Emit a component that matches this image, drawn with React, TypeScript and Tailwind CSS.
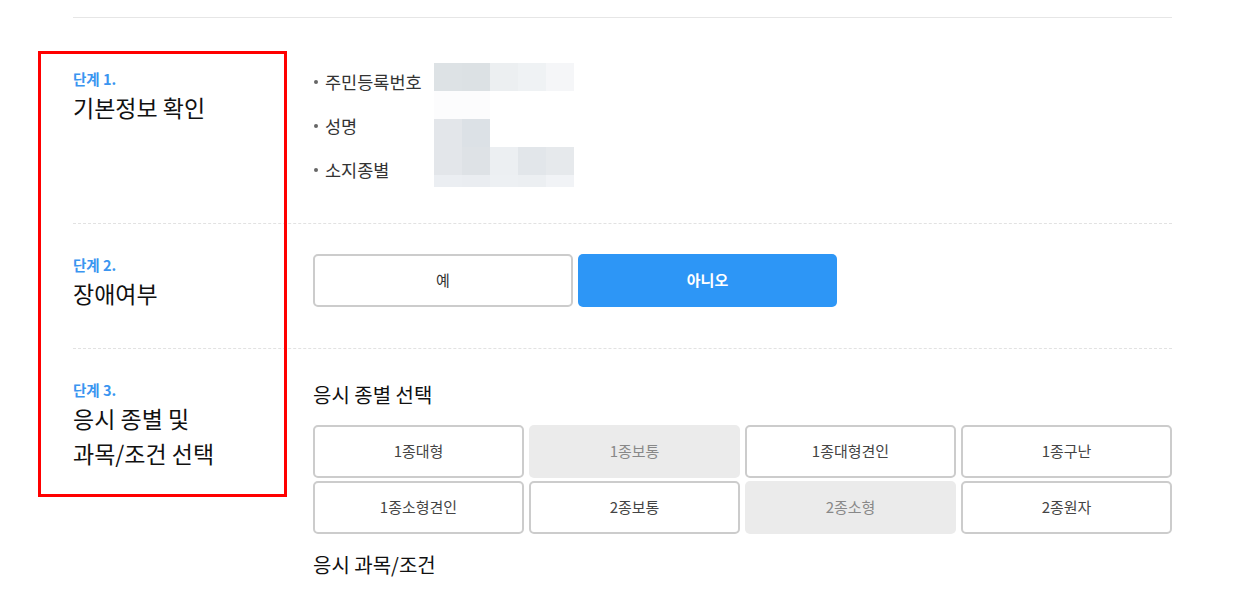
import React from "react";

const font = { fontFamily: '"Noto Sans CJK KR", "Noto Sans", sans-serif' };

// pixelated blur cells (masked personal data)
const blurRows = [
  { h: "h-[28px]", cells: ["bg-[#dde2e5]", "bg-[#dce1e4]", "bg-[#eceff1]", "bg-[#eff2f4]", "bg-[#f5f6f8]"] },
  { h: "h-[28px]", cells: ["bg-[#fcfcfd]", "bg-[#fcfcfd]", "bg-white", "bg-white", "bg-white"] },
  { h: "h-[28px]", cells: ["bg-[#e3e6ea]", "bg-[#dce1e6]", "bg-white", "bg-white", "bg-white"] },
  { h: "h-[28px]", cells: ["bg-[#e3e6ea]", "bg-[#dee2e6]", "bg-[#eceff2]", "bg-[#e2e6ea]", "bg-[#e6e9ec]"] },
  { h: "h-[12px]", cells: ["bg-[#ebeef2]", "bg-[#eaedf1]", "bg-[#edf0f3]", "bg-[#eceff2]", "bg-[#f1f3f6]"] },
];

const licenses = [
  { name: "1종대형", disabled: false },
  { name: "1종보통", disabled: true },
  { name: "1종대형견인", disabled: false },
  { name: "1종구난", disabled: false },
  { name: "1종소형견인", disabled: false },
  { name: "2종보통", disabled: false },
  { name: "2종소형", disabled: true },
  { name: "2종원자", disabled: false },
];

function StepLabel({ step, title }: { step: string; title: React.ReactNode }) {
  return (
    <div className="w-[240px] shrink-0">
      <p className="text-[14.5px] leading-[22px] font-bold text-[#3a95f0]">{step}</p>
      <h3 className="text-[23px] leading-[35px] text-[#111]">{title}</h3>
    </div>
  );
}

export default function App() {
  return (
    <div className="relative min-h-[612px] bg-white" style={font}>
      <div className="ml-[73px] w-[1099px] pt-[17px]">
        {/* step 1 */}
        <section className="flex border-t border-[#e6e6e6] h-[206px]">
          <div className="pt-[50px]">
            <StepLabel step="단계 1." title="기본정보 확인" />
          </div>
          <div className="flex pt-[42px]">
            <ul className="w-[121px]">
              {["주민등록번호", "성명", "소지종별"].map((l) => (
                <li key={l} className="flex items-center h-[44px] text-[17.5px] text-[#333]">
                  <span className="w-[4px] h-[4px] rounded-full bg-[#666] ml-[1px] mr-[7px]" />
                  {l}
                </li>
              ))}
            </ul>
            <div className="mt-[3px] flex flex-col">
              {blurRows.map((r, i) => (
                <div key={i} className={`flex ${r.h}`}>
                  {r.cells.map((c, j) => (
                    <div key={j} className={`w-[28px] ${c}`} />
                  ))}
                </div>
              ))}
            </div>
          </div>
        </section>

        {/* step 2 */}
        <section className="flex border-t border-dashed border-[#e2e2e2] h-[125px]">
          <div className="pt-[30px]">
            <StepLabel step="단계 2." title="장애여부" />
          </div>
          <div className="flex gap-[5px] pt-[30px]">
            <button className="w-[260px] h-[53px] rounded-[5px] border-2 border-[#cccccc] bg-white text-[15px] text-[#333]">
              예
            </button>
            <button className="w-[259px] h-[53px] rounded-[5px] bg-[#2d96f6] text-[15px] font-bold text-white">
              아니오
            </button>
          </div>
        </section>

        {/* step 3 */}
        <section className="flex border-t border-dashed border-[#e2e2e2]">
          <div className="pt-[30px]">
            <StepLabel
              step="단계 3."
              title={
                <>
                  응시 종별 및
                  <br />
                  과목/조건 선택
                </>
              }
            />
          </div>
          <div className="flex-1 pt-[33px]">
            <h4 className="text-[20px] leading-[26px] text-[#111]">응시 종별 선택</h4>
            <div className="mt-[17px] grid grid-cols-4 gap-x-[5px] gap-y-[3px]">
              {licenses.map((l) =>
                l.disabled ? (
                  <div
                    key={l.name}
                    className="h-[53px] rounded-[5px] bg-[#ebebeb] flex items-center justify-center text-[15px] text-[#888]"
                  >
                    {l.name}
                  </div>
                ) : (
                  <button
                    key={l.name}
                    className="h-[53px] rounded-[5px] border-2 border-[#cccccc] bg-white text-[15px] text-[#444]"
                  >
                    {l.name}
                  </button>
                )
              )}
            </div>
            <h4 className="mt-[18px] text-[20px] leading-[26px] text-[#111]">응시 과목/조건</h4>
          </div>
        </section>
      </div>

      {/* highlight annotation */}
      <div className="absolute left-[38px] top-[51px] w-[249px] h-[446px] border-[3px] border-[#ff0000] pointer-events-none" />
    </div>
  );
}
